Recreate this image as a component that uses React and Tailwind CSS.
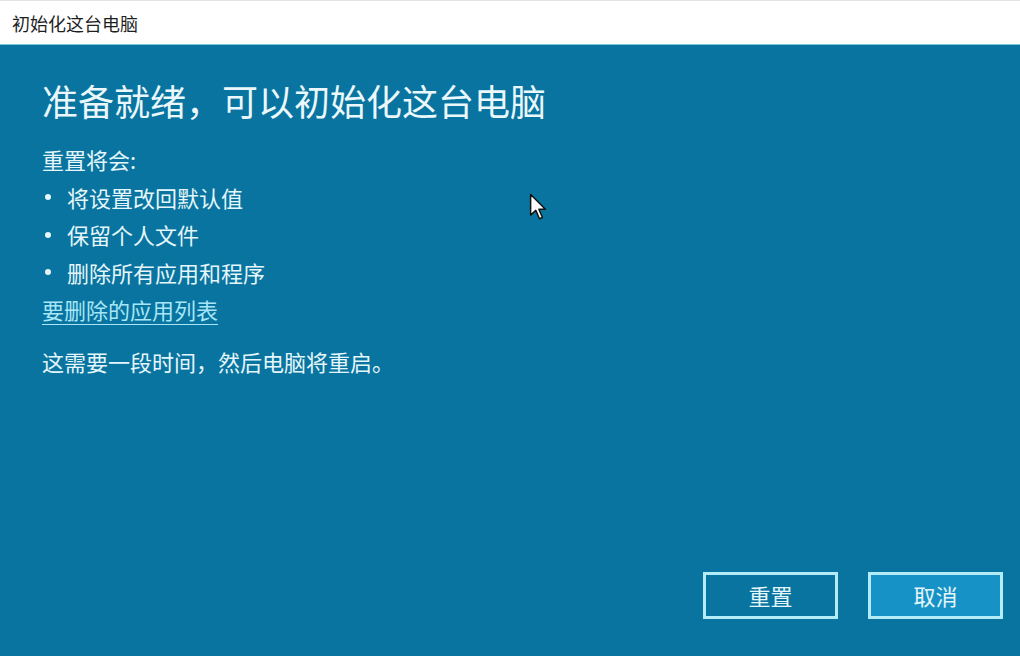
import React from "react";

const font = { fontFamily: '"Noto Sans CJK SC", "Noto Sans", sans-serif' };

const items = ["将设置改回默认值", "保留个人文件", "删除所有应用和程序"];

export default function App() {
  return (
    <div
      className="w-[1020px] h-[656px] flex flex-col overflow-hidden relative"
      style={font}
    >
      <div className="h-[45px] shrink-0 bg-white border-t border-[#e3e3e3] border-b border-b-[#7cc6dc] flex items-center px-[12px]">
        <span className="text-[18px] text-[#1f1f1f] leading-none">初始化这台电脑</span>
      </div>

      <div className="flex-1 bg-[#09749f] flex flex-col text-[#e4f6fb]">
        <div className="px-[42px] pt-[33px]">
          <h1 className="text-[36px] leading-[44px] text-[#eaf8fc]">准备就绪，可以初始化这台电脑</h1>
          <div className="mt-[19px] text-[22px] leading-[37.5px]">
            <p>重置将会:</p>
            <ul>
              {items.map((t) => (
                <li key={t} className="flex items-center">
                  <span className="w-[25px] pl-[3px] flex">
                    <span className="w-[6px] h-[6px] rounded-full bg-[#e4f6fb]" />
                  </span>
                  <span>{t}</span>
                </li>
              ))}
            </ul>
            <a className="underline underline-offset-[5px] decoration-1 text-[#a6e6f7]">要删除的应用列表</a>
            <p className="mt-[14px]">这需要一段时间，然后电脑将重启。</p>
          </div>
        </div>

        <div className="mt-auto flex justify-end gap-[30px] pr-[17px] pb-[37px]">
          <button className="w-[135px] h-[47px] border-[3px] border-[#b3ecf6] text-[22px] text-[#e4f6fb]">
            重置
          </button>
          <button className="w-[135px] h-[47px] border-[3px] border-[#b3ecf6] bg-[#1792c6] text-[22px] text-[#e4f6fb]">
            取消
          </button>
        </div>
      </div>

      <svg
        className="absolute left-[529px] top-[193px]"
        width="18"
        height="28"
        viewBox="0 0 12 19"
      >
        <path
          d="M1 1 L1 15 L4.5 11.8 L7 17.5 L9 16.6 L6.6 11 L11 11 Z"
          fill="#ffffff"
          stroke="#111"
          strokeWidth="1"
          strokeLinejoin="round"
        />
      </svg>
    </div>
  );
}
